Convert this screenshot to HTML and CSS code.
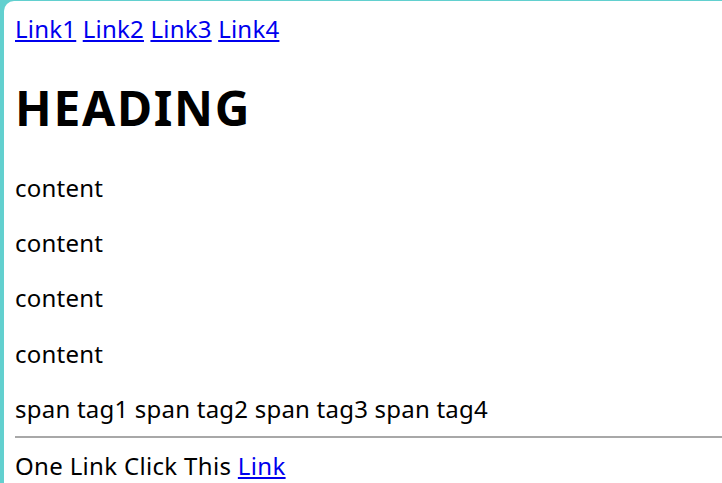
FILE: index.html
```html
<!DOCTYPE html>
<html>
<head>
<meta charset="utf-8">
<link rel="stylesheet" href="styles.css">
</head>
<body>
<div class="page">
  <div class="links"><a href="#">Link1</a> <a href="#">Link2</a> <a href="#">Link3</a> <a href="#">Link4</a></div>
  <h1 class="heading">HEADING</h1>
  <p class="para">content</p>
  <p class="para">content</p>
  <p class="para">content</p>
  <p class="para">content</p>
  <div class="spans"><span>span tag1</span> <span>span tag2</span> <span>span tag3</span> <span>span tag4</span></div>
  <hr class="rule">
  <div class="footer">One Link Click This <a href="#">Link</a></div>
</div>
</body>
</html>
```
FILE: styles.css
```css
html, body {
  margin: 0;
  padding: 0;
  overflow: hidden;
}
body {
  background: #62d0cf;
  height: 483px;
  font-family: "Noto Sans", "Open Sans", sans-serif;
  font-size: 24px;
  line-height: 1.3;
  letter-spacing: 0.22px;
  color: #000;
}
.page {
  margin: 1px 0 0 4px;
  height: 482px;
  background: #fff;
  border-top-left-radius: 10px;
  padding: 12px 0 0 11px;
  box-sizing: border-box;
  overflow: hidden;
}
a {
  color: #0000ee;
}
.heading {
  font-size: 48px;
  font-weight: 700;
  letter-spacing: 1.7px;
  margin: 32px 0;
  line-height: 1.33;
}
.para {
  margin: 24px 0;
}
.footer {
  letter-spacing: 0.33px;
}
.rule {
  border: 0;
  border-top: 2px solid #a8a8a8;
  margin: 12px 0;
}
```
